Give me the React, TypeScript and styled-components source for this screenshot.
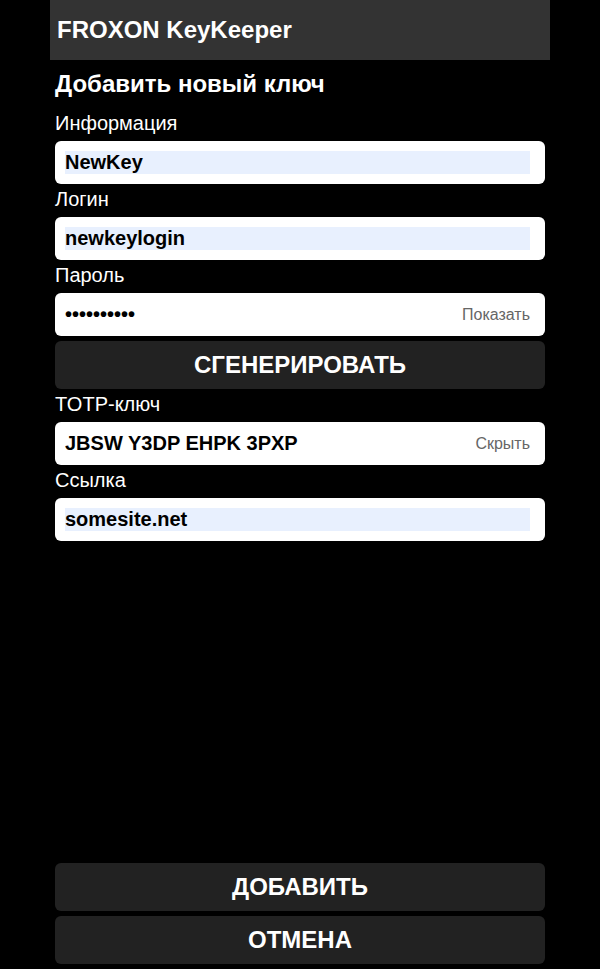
import { useState } from 'react'
import styled, { createGlobalStyle } from 'styled-components'

const GlobalStyle = createGlobalStyle`
  html, body {
    margin: 0;
    padding: 0;
    background: #000;
  }
  body {
    font-family: "Liberation Sans", Arial, sans-serif;
    color: #fff;
  }
`

const Page = styled.div`
  width: 500px;
  min-height: 969px;
  margin: 0 auto;
  display: flex;
  flex-direction: column;
  background: #000;
`

const Header = styled.div`
  height: 60px;
  display: flex;
  align-items: center;
  padding-left: 7px;
  background-color: #333333;
  font-size: 24px;
  font-weight: bold;
`

const Content = styled.div`
  flex: 1;
  display: flex;
  flex-direction: column;
  padding: 0 5px 5px;
`

const Heading = styled.div`
  margin: 10px 0 10px;
  font-size: 24px;
  font-weight: bold;
`

const Label = styled.div`
  margin: 4px 0 6px;
  font-size: 20px;
`

const Field = styled.div`
  height: 43px;
  box-sizing: border-box;
  padding: 10px 15px 10px 10px;
  display: flex;
  align-items: center;
  gap: 10px;
  background: #fff;
  border-radius: 6px;
`

const Input = styled.input<{ $filled?: boolean }>`
  flex: 1;
  min-width: 0;
  height: 23px;
  padding: 0;
  border: none;
  outline: none;
  background: ${p => (p.$filled ? '#e8f0fe' : 'transparent')};
  font-family: "Liberation Sans", Arial, sans-serif;
  font-size: 20px;
  font-weight: bold;
  color: #000;
`

const Toggle = styled.span`
  font-size: 16px;
  color: #666;
  cursor: pointer;
`

const Button = styled.button`
  height: 48px;
  margin-top: 5px;
  border: none;
  border-radius: 6px;
  background: #222222;
  color: #fff;
  font-family: "Liberation Sans", Arial, sans-serif;
  font-size: 24px;
  font-weight: bold;
  text-transform: uppercase;
  cursor: pointer;
`

const Spacer = styled.div`
  flex: 1;
`

export default function App() {
  const [showPass, setShowPass] = useState(false)
  const [showTotp, setShowTotp] = useState(true)

  return (
    <>
      <GlobalStyle />
      <Page>
        <Header>FROXON KeyKeeper</Header>
        <Content>
          <Heading>Добавить новый ключ</Heading>

          <Label>Информация</Label>
          <Field>
            <Input $filled defaultValue="NewKey" />
          </Field>

          <Label>Логин</Label>
          <Field>
            <Input $filled defaultValue="newkeylogin" />
          </Field>

          <Label>Пароль</Label>
          <Field>
            <Input type={showPass ? 'text' : 'password'} defaultValue="Xk29fPq7Lm" />
            <Toggle onClick={() => setShowPass(!showPass)}>{showPass ? 'Скрыть' : 'Показать'}</Toggle>
          </Field>
          <Button>Сгенерировать</Button>

          <Label>TOTP-ключ</Label>
          <Field>
            <Input type={showTotp ? 'text' : 'password'} defaultValue="JBSW Y3DP EHPK 3PXP" />
            <Toggle onClick={() => setShowTotp(!showTotp)}>{showTotp ? 'Скрыть' : 'Показать'}</Toggle>
          </Field>

          <Label>Ссылка</Label>
          <Field>
            <Input $filled defaultValue="somesite.net" />
          </Field>

          <Spacer />
          <Button>Добавить</Button>
          <Button>Отмена</Button>
        </Content>
      </Page>
    </>
  )
}
